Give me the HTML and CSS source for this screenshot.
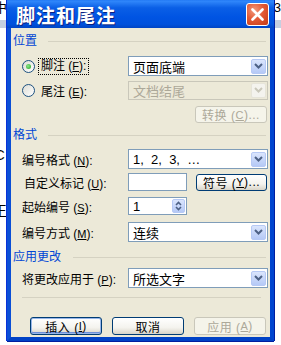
FILE: index.html
```html
<!DOCTYPE html>
<html lang="zh-CN">
<head>
    <meta charset="UTF-8">
    <title>脚注和尾注</title>
    <link rel="stylesheet" href="styles.css">
</head>
<body>
    <div class="doc">
        <div class="doc-line">中<span class="doc-right">3</span></div>
        <div class="doc-bar"></div>
        <div class="doc-c">C</div>
        <div class="doc-w">王</div>
    </div>

    <div class="window">
        <div class="titlebar">
            <span class="title">脚注和尾注</span>
            <span class="close">
                <svg width="13" height="13" viewBox="0 0 13 13"><path d="M1.5 1.5 L11.5 11.5 M11.5 1.5 L1.5 11.5" stroke="#fff" stroke-width="2.6" stroke-linecap="round"/></svg>
            </span>
        </div>
        <div class="content">
            <div class="group-head">位置</div>

            <div class="row r-first">
                <label class="radio-label">
                    <span class="radio checked"></span>
                    <span class="focus">脚注 (<u>F</u>):</span>
                </label>
                <div class="select">
                    <span class="value">页面底端</span>
                    <span class="arrow"><svg width="9" height="6" viewBox="0 0 9 6"><path d="M1 1 L4.5 4.5 L8 1" fill="none" stroke="#4d6185" stroke-width="2"/></svg></span>
                </div>
            </div>
            <div class="row r-4">
                <label class="radio-label">
                    <span class="radio"></span>
                    <span class="plain">尾注 (<u>E</u>):</span>
                </label>
                <div class="select disabled">
                    <span class="value">文档结尾</span>
                    <span class="arrow"><svg width="9" height="6" viewBox="0 0 9 6"><path d="M1 1 L4.5 4.5 L8 1" fill="none" stroke="#c9c7ba" stroke-width="2"/></svg></span>
                </div>
            </div>
            <div class="row r-btn">
                <span></span>
                <div class="btn-right"><span class="btn disabled">转换 (<u>C</u>)...</span></div>
            </div>

            <div class="group-head h-format">格式</div>

            <div class="row r-8">
                <span class="label">编号格式 (<u>N</u>):</span>
                <div class="select">
                    <span class="value">1,&nbsp; 2,&nbsp; 3,&nbsp; …</span>
                    <span class="arrow"><svg width="9" height="6" viewBox="0 0 9 6"><path d="M1 1 L4.5 4.5 L8 1" fill="none" stroke="#4d6185" stroke-width="2"/></svg></span>
                </div>
            </div>
            <div class="row r-4 short">
                <span class="label label-wide">自定义标记 (<u>U</u>):</span>
                <div class="split">
                    <span class="input"></span>
                    <span class="btn">符号 (<u>Y</u>)...</span>
                </div>
            </div>
            <div class="row r-6 short">
                <span class="label">起始编号 (<u>S</u>):</span>
                <div class="split">
                    <span class="input spin">
                        <span class="value">1</span>
                        <span class="spin-btn">
                            <svg width="7" height="10" viewBox="0 0 7 10"><path d="M1 4 L3.5 1.5 L6 4 M1 6 L3.5 8.5 L6 6" fill="none" stroke="#4d6185" stroke-width="1.6"/></svg>
                        </span>
                    </span>
                </div>
            </div>
            <div class="row r-7">
                <span class="label">编号方式 (<u>M</u>):</span>
                <div class="select">
                    <span class="value">连续</span>
                    <span class="arrow"><svg width="9" height="6" viewBox="0 0 9 6"><path d="M1 1 L4.5 4.5 L8 1" fill="none" stroke="#4d6185" stroke-width="2"/></svg></span>
                </div>
            </div>

            <div class="group-head h-apply">应用更改</div>

            <div class="row r-5">
                <span class="label">将更改应用于 (<u>P</u>):</span>
                <div class="select">
                    <span class="value">所选文字</span>
                    <span class="arrow"><svg width="9" height="6" viewBox="0 0 9 6"><path d="M1 1 L4.5 4.5 L8 1" fill="none" stroke="#4d6185" stroke-width="2"/></svg></span>
                </div>
            </div>

            <div class="separator"></div>

            <div class="buttons">
                <span class="btn default">插入 (<u>I</u>)</span>
                <span class="btn">取消</span>
                <span class="btn disabled">应用 (<u>A</u>)</span>
            </div>
        </div>
    </div>
</body>
</html>
```

FILE: styles.css
```css
body {
    margin: 0;
    width: 281px;
    height: 345px;
    background-color: #fff;
    position: relative;
    overflow: hidden;
    font-family: "Liberation Sans", "Noto Sans CJK SC", sans-serif;
    font-size: 12px;
}

/* the document behind the dialog */
.doc {
    color: #000;
}
.doc-line {
    height: 20px;
    font-size: 13px;
    line-height: 16px;
    display: flex;
    justify-content: space-between;
    margin-left: -6px;
}
.doc-right {
    padding-right: 0;
}
.doc-bar {
    height: 8px;
    background-color: #c5cfe0;
}
.doc-c {
    position: absolute;
    left: -6px;
    top: 146px;
    font-size: 15px;
}
.doc-w {
    position: absolute;
    left: -7px;
    top: 200px;
    font-size: 14px;
}

/* dialog window */
.window {
    position: absolute;
    left: 7px;
    top: -3px;
    width: 259px;
    height: 340px;
    border: 4px solid #0853e0;
    border-top: none;
    border-left-color: #0a4fd6;
    border-right-color: #0045cf;
    border-bottom-color: #0042c6;
    background-color: #ece9d8;
    box-shadow: -1px 0 0 #0831d9, 1px 0 0 #001ea0, 0 1px 0 #001ea0;
}
.titlebar {
    height: 31px;
    margin: 0 -4px;
    background: linear-gradient(#0a5ee8 0%, #2f86fa 14%, #0a5fe6 35%, #0054e3 65%, #0051dc 88%, #0044c4 100%);
    display: flex;
    align-items: center;
    justify-content: space-between;
    padding: 0 5px 0 9px;
    box-sizing: border-box;
}
.title {
    color: #fff;
    font-family: "Noto Sans CJK SC", sans-serif;
    font-weight: bold;
    font-size: 19px;
    letter-spacing: 1px;
    margin-top: 3px;
    text-shadow: 1px 1px 0 #0a1e80;
}
.close {
    width: 21px;
    height: 21px;
    margin-top: 3px;
    border: 1px solid #fff;
    border-radius: 3px;
    background: radial-gradient(circle at 35% 30%, #f19a7e 0%, #e35a36 45%, #c53a16 100%);
    display: flex;
    align-items: center;
    justify-content: center;
}

.content {
    padding: 7px 4px 0 2px;
    color: #000;
}

.group-head {
    height: 12px;
    line-height: 12px;
    color: #0046d5;
    display: flex;
    align-items: center;
    font-size: 12px;
}
.group-head::after {
    content: "";
    flex: 1;
    height: 0;
    border-top: 1px solid #d5d2c2;
    margin-left: 11px;
    margin-top: 1px;
}
.h-format {
    margin-top: 6px;
}
.h-apply {
    margin-top: 9px;
}
.h-apply::after {
    margin-left: 12px;
}

.row {
    display: grid;
    grid-template-columns: 115px 140px;
    align-items: center;
    height: 20px;
}
.row.short {
    height: 18px;
}
.r-first { margin-top: 9px; }
.r-4 { margin-top: 4px; }
.r-5 { margin-top: 5px; }
.r-6 { margin-top: 6px; }
.r-7 { margin-top: 7px; }
.r-8 { margin-top: 8px; }
.r-btn {
    margin-top: 6px;
    height: 17px;
}

.label {
    padding-left: 9px;
    white-space: nowrap;
}
.label-wide {
    padding-left: 11px;
}
u {
    font-size: 11px;
}

.radio-label {
    display: flex;
    align-items: center;
    padding-left: 9px;
}
.radio {
    width: 11px;
    height: 11px;
    border: 1px solid #1c5180;
    border-radius: 50%;
    background: linear-gradient(135deg, #dcdcd4, #fff);
    position: relative;
    margin-right: 3px;
}
.radio.checked::after {
    content: "";
    position: absolute;
    left: 3px;
    top: 3px;
    width: 5px;
    height: 5px;
    border-radius: 50%;
    background: radial-gradient(circle at 40% 40%, #8ae88a, #21a121);
}
.focus {
    border: 1px dotted #000;
    padding: 1px 2px;
    line-height: 13px;
}
.plain {
    padding: 1px 3px;
}

.select {
    height: 20px;
    box-sizing: border-box;
    border: 1px solid #7f9db9;
    background-color: #fff;
    display: flex;
    align-items: center;
    justify-content: space-between;
    padding: 0 1px 0 4px;
    font-size: 13px;
}
.select.disabled {
    height: 19px;
    border-color: #c9c7ba;
    background-color: #ece9d8;
    color: #aca899;
}
.arrow {
    width: 15px;
    height: 15px;
    box-sizing: border-box;
    border: 1px solid #b6c9f5;
    border-radius: 2px;
    background: linear-gradient(#dae5fd, #b5c9f6);
    display: flex;
    align-items: center;
    justify-content: center;
}
.select.disabled .arrow {
    border-color: #e6e4d9;
    background: #f4f3ee;
}

.split {
    display: flex;
    justify-content: space-between;
    align-items: center;
}
.input {
    width: 59px;
    height: 18px;
    box-sizing: border-box;
    border: 1px solid #7f9db9;
    background-color: #fff;
}
.spin {
    display: flex;
    justify-content: space-between;
    align-items: center;
    padding: 0 1px 0 4px;
    font-size: 13px;
}
.spin-btn {
    width: 13px;
    height: 14px;
    box-sizing: border-box;
    border: 1px solid #b6c9f5;
    border-radius: 2px;
    background: linear-gradient(#dae5fd, #b5c9f6);
    display: flex;
    align-items: center;
    justify-content: center;
}

.btn-right {
    display: flex;
    justify-content: flex-end;
    padding-right: 1px;
}
.btn {
    width: 72px;
    height: 17px;
    box-sizing: border-box;
    border: 1px solid #003c74;
    border-radius: 3px;
    background: linear-gradient(#fff 0%, #f4f3ee 60%, #d8d4c8 100%);
    display: flex;
    align-items: center;
    justify-content: center;
    font-size: 12px;
    letter-spacing: 0.5px;
}
.split .btn {
    width: 71px;
    margin-right: 1px;
}
.btn.disabled {
    border-color: #c9c7ba;
    background: #f5f4ea;
    color: #aca899;
}
.btn.default {
    box-shadow: inset 0 0 0 1px #98b6e8, inset 0 -1px 0 1px #6d8fd8;
}

.separator {
    margin: 9px 5px 0 9px;
    border-top: 1px solid #d5d2c2;
}
.buttons {
    margin-top: 19px;
    display: flex;
    gap: 10px;
    padding-left: 17px;
}
.buttons .btn {
    height: 18px;
}
```
